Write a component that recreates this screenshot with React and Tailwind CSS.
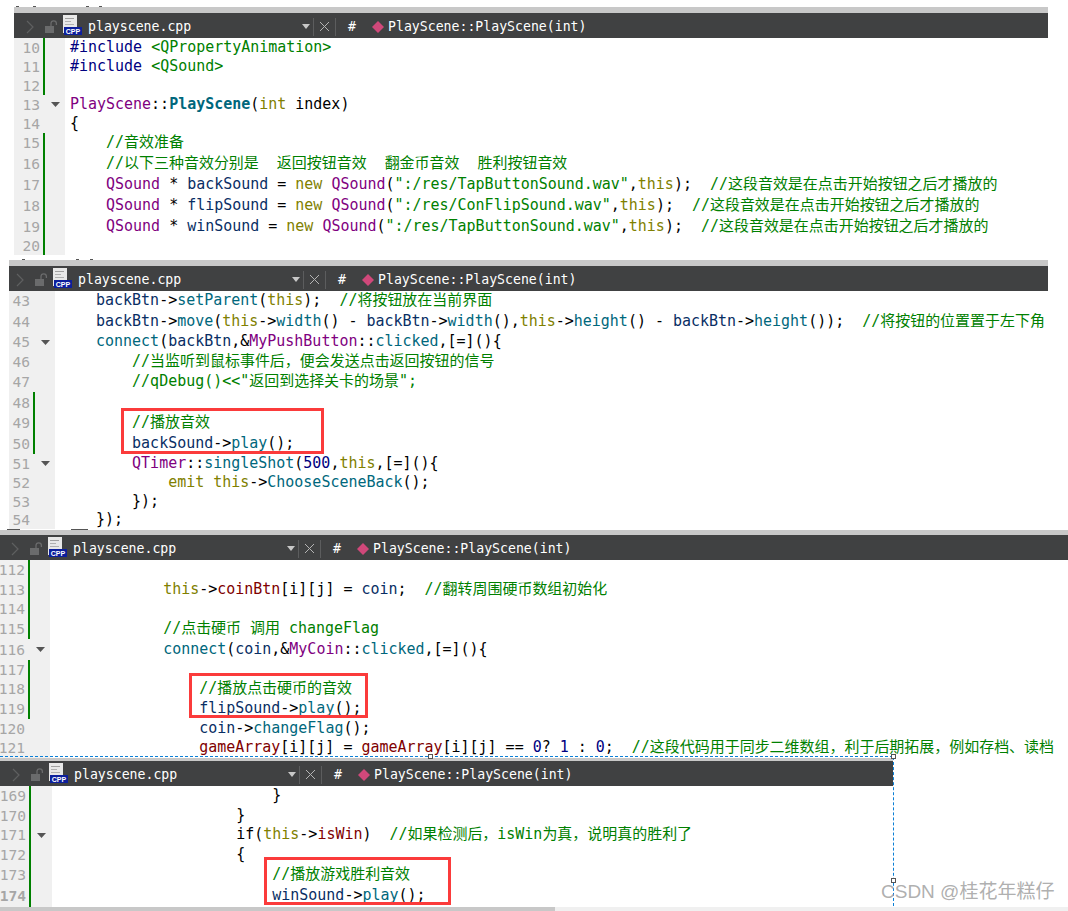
const COLORS = {
  p: 'text-[#000000]',
  n: 'text-[#000080]',
  g: 'text-[#008000]',
  m: 'text-[#800080]',
  f: 'text-[#00677c]',
  b: 'text-[#00677c] font-bold',
  k: 'text-[#808000]',
  v: 'text-[#092e64]',
  r: 'text-[#800000]',
};

const soundLine = (name, file, comment) => [
  ['p', '    '], ['m', 'QSound'], ['p', ' * '], ['v', name], ['p', ' = '], ['k', 'new'], ['p', ' '], ['m', 'QSound'], ['p', '('],
  ['g', `":/res/${file}"`], ['p', ','], ['k', 'this'], ['p', ');  '], ['g', comment],
];

const PLAY_COMMENT = '//这段音效是在点击开始按钮之后才播放的';

const PANELS = [
  {
    left: 'ml-[14px] w-[1034px]', pad: 'pl-[8px]', num: 'w-[26px]', rest: 'w-[20px]', code: 'pl-[5px]', top: 'mt-[6px]', band: 'h-[6px]',
    ticks: ['ml-[2px] w-[3px]', 'ml-[14px] w-[3px]', 'ml-[50px] w-[3px]', 'ml-[10px] w-[3px]'],
    rows: [
      { n: 10, h: 'h-[19px]', mark: true, t: [['n', '#include'], ['p', ' '], ['g', '<QPropertyAnimation>']] },
      { n: 11, h: 'h-[19px]', mark: true, t: [['n', '#include'], ['p', ' '], ['g', '<QSound>']] },
      { n: 12, h: 'h-[19px]', mark: true, t: [] },
      { n: 13, h: 'h-[19px]', fold: true, t: [['m', 'PlayScene'], ['p', '::'], ['b', 'PlayScene'], ['p', '('], ['k', 'int'], ['p', ' index)']] },
      { n: 14, h: 'h-[19px]', t: [['p', '{']] },
      { n: 15, h: 'h-[20px]', mark: true, t: [['g', '    //音效准备']] },
      { n: 16, h: 'h-[21px]', mark: true, t: [['g', '    //以下三种音效分别是  返回按钮音效  翻金币音效  胜利按钮音效']] },
      { n: 17, h: 'h-[21px]', mark: true, t: soundLine('backSound', 'TapButtonSound.wav', PLAY_COMMENT) },
      { n: 18, h: 'h-[21px]', mark: true, t: soundLine('flipSound', 'ConFlipSound.wav', PLAY_COMMENT) },
      { n: 19, h: 'h-[21px]', mark: true, t: soundLine('winSound', 'TapButtonSound.wav', PLAY_COMMENT) },
      { n: 20, h: 'h-[18px]', mark: true, t: [] },
    ],
  },
  {
    left: 'ml-[9px] w-[1039px]', pad: 'pl-[3px]', num: 'w-[21px]', rest: 'w-[20px]', code: 'pl-[5px]', top: 'mt-[4px]', band: 'h-[6px]',
    ticks: ['ml-[13px] w-[3px]', 'ml-[51px] w-[3px]', 'ml-[11px] w-[3px]'],
    rows: [
      { n: 43, h: 'h-[20px]', t: [['v', '    backBtn'], ['p', '->'], ['f', 'setParent'], ['p', '('], ['k', 'this'], ['p', ');  '], ['g', '//将按钮放在当前界面']] },
      { n: 44, h: 'h-[21px]', t: [['v', '    backBtn'], ['p', '->'], ['f', 'move'], ['p', '('], ['k', 'this'], ['p', '->'], ['f', 'width'], ['p', '() - '], ['v', 'backBtn'], ['p', '->'], ['f', 'width'], ['p', '(),'], ['k', 'this'], ['p', '->'], ['f', 'height'], ['p', '() - '], ['v', 'backBtn'], ['p', '->'], ['f', 'height'], ['p', '());  '], ['g', '//将按钮的位置置于左下角']] },
      { n: 45, h: 'h-[20px]', fold: true, t: [['f', '    connect'], ['p', '('], ['v', 'backBtn'], ['p', ',&'], ['m', 'MyPushButton'], ['p', '::'], ['f', 'clicked'], ['p', ',[=](){']] },
      { n: 46, h: 'h-[20px]', t: [['g', '        //当监听到鼠标事件后，便会发送点击返回按钮的信号']] },
      { n: 47, h: 'h-[20px]', t: [['g', '        //qDebug()<<"返回到选择关卡的场景";']] },
      { n: 48, h: 'h-[21px]', mark: true, t: [] },
      { n: 49, h: 'h-[20px]', mark: true, t: [['g', '        //播放音效']] },
      { n: 50, h: 'h-[21px]', mark: true, t: [['v', '        backSound'], ['p', '->'], ['f', 'play'], ['p', '();']] },
      { n: 51, h: 'h-[19px]', fold: true, t: [['m', '        QTimer'], ['p', '::'], ['f', 'singleShot'], ['p', '('], ['n', '500'], ['p', ','], ['k', 'this'], ['p', ',[=](){']] },
      { n: 52, h: 'h-[19px]', t: [['k', '            emit'], ['p', ' '], ['k', 'this'], ['p', '->'], ['f', 'ChooseSceneBack'], ['p', '();']] },
      { n: 53, h: 'h-[19px]', t: [['p', '        });']] },
      { n: 54, h: 'h-[18px]', t: [['p', '    });']] },
    ],
  },
  {
    left: 'w-[1068px]', pad: 'pl-[7px]', num: 'w-[25px]', rest: 'w-[20px]', code: 'pl-[5px]', top: 'mt-0', band: 'h-[5px]',
    ticks: ['ml-[7px] w-[13px]', 'ml-[51px] w-[17px]'],
    rows: [
      { n: 112, h: 'h-[20px]', mark: true, t: [] },
      { n: 113, h: 'h-[19px]', mark: true, t: [['k', '            this'], ['p', '->'], ['r', 'coinBtn'], ['p', '[i][j] = '], ['v', 'coin'], ['p', ';  '], ['g', '//翻转周围硬币数组初始化']] },
      { n: 114, h: 'h-[20px]', mark: true, t: [] },
      { n: 115, h: 'h-[20px]', mark: true, t: [['g', '            //点击硬币 调用 changeFlag']] },
      { n: 116, h: 'h-[21px]', fold: true, t: [['f', '            connect'], ['p', '('], ['v', 'coin'], ['p', ',&'], ['m', 'MyCoin'], ['p', '::'], ['f', 'clicked'], ['p', ',[=](){']] },
      { n: 117, h: 'h-[19px]', mark: true, t: [] },
      { n: 118, h: 'h-[19px]', mark: true, t: [['g', '                //播放点击硬币的音效']] },
      { n: 119, h: 'h-[21px]', mark: true, t: [['v', '                flipSound'], ['p', '->'], ['f', 'play'], ['p', '();']] },
      { n: 120, h: 'h-[19px]', t: [['v', '                coin'], ['p', '->'], ['f', 'changeFlag'], ['p', '();']] },
      { n: 121, h: 'h-[20px]', t: [['r', '                gameArray'], ['p', '[i][j] = '], ['r', 'gameArray'], ['p', '[i][j] == '], ['n', '0'], ['p', '? '], ['n', '1'], ['p', ' : '], ['n', '0'], ['p', ';  '], ['g', '//这段代码用于同步二维数组，利于后期拓展，例如存档、读档']] },
    ],
  },
  {
    left: 'w-[893px]', pad: 'pl-[8px]', num: 'w-[26px]', rest: 'w-[21px]', code: 'pl-[4px]', top: 'mt-0', band: 'h-[3px]',
    ticks: [],
    rows: [
      { n: 169, h: 'h-[20px]', mark: true, t: [['p', '                        }']] },
      { n: 170, h: 'h-[19px]', mark: true, t: [['p', '                    }']] },
      { n: 171, h: 'h-[20px]', mark: true, fold: true, t: [['p', '                    if('], ['k', 'this'], ['p', '->'], ['r', 'isWin'], ['p', ')  '], ['g', '//如果检测后，isWin为真，说明真的胜利了']] },
      { n: 172, h: 'h-[20px]', mark: true, t: [['p', '                    {']] },
      { n: 173, h: 'h-[20px]', mark: true, t: [['g', '                        //播放游戏胜利音效']] },
      { n: 174, h: 'h-[22px]', mark: true, bold: true, t: [['v', '                        winSound'], ['p', '->'], ['f', 'play'], ['p', '();']] },
    ],
  },
];

function FileIcon() {
  return (
    <svg width="19" height="20" viewBox="0 0 19 20" className="shrink-0">
      <rect x="0" y="0" width="14" height="18" fill="#e8e8e8" />
      <rect x="2" y="3" width="9" height="1" fill="#a0a0a0" />
      <rect x="2" y="6" width="6" height="1" fill="#b0b0b0" />
      <rect x="2" y="9" width="9" height="1" fill="#b0b0b0" />
      <rect x="1" y="12" width="18" height="8" fill="#0c1f9c" />
      <text x="10" y="19" textAnchor="middle" fontSize="7" fontWeight="700" fill="#ffffff" fontFamily="Liberation Sans, sans-serif">CPP</text>
    </svg>
  );
}

function EditorBar({ pad }) {
  return (
    <div className={`flex h-[25px] items-center gap-0 bg-[#404142] pt-[2px] font-['DejaVu_Sans_Mono',monospace] text-[13.2px] text-white ${pad}`}>
      <svg width="14" height="14" viewBox="0 0 14 14" className="ml-[1px] shrink-0 text-[#5f6061]">
        <path d="M4 1l6 6-6 6" fill="none" stroke="currentColor" strokeWidth="1.2" />
      </svg>
      <svg width="14" height="14" viewBox="0 0 14 14" className="ml-[8px] shrink-0">
        <rect x="0" y="6" width="9" height="7" fill="#6a6b6c" />
        <path d="M6 6V3.5a2.7 2.7 0 0 1 5.4 0V5" fill="none" stroke="#6a6b6c" strokeWidth="1.3" />
      </svg>
      <span className="ml-[4px] mb-[3px] shrink-0"><FileIcon /></span>
      <span className="ml-[6px] w-[214px] shrink-0 whitespace-pre">playscene.cpp</span>
      <svg width="8" height="5" viewBox="0 0 8 5" className="shrink-0">
        <path d="M0 0h8L4 5z" fill="#c8c8c8" />
      </svg>
      <span className="ml-[3px] h-[18px] w-px shrink-0 bg-[#5c5d5e]" />
      <svg width="11" height="11" viewBox="0 0 11 11" className="ml-[5px] shrink-0">
        <path d="M1 1l9 9M10 1l-9 9" stroke="#b4b4b4" strokeWidth="1" />
      </svg>
      <span className="ml-[5px] h-[18px] w-px shrink-0 bg-[#5c5d5e]" />
      <span className="ml-[12px] w-[22px] shrink-0">#</span>
      <svg width="12" height="12" viewBox="0 0 12 12" className="ml-[2px] shrink-0">
        <path d="M6 0l6 6-6 6-6-6z" fill="#d0487a" />
      </svg>
      <span className="ml-[4px] whitespace-pre">PlayScene::PlayScene(int)</span>
    </div>
  );
}

function CodeRow({ row, num, rest, code }) {
  return (
    <div className={`flex ${row.h}`}>
      <div className="flex shrink-0 bg-[#f0f0f0]">
        <span className={`flex items-center justify-end text-[14.6px] text-[#a6a6a6] ${num} ${row.bold ? 'font-bold text-[#6e6e6e]' : ''}`}>{row.n}</span>
        <span className="w-[3px]" />
        <span className={`w-[2px] ${row.mark ? 'bg-[#008000]' : ''}`} />
        <span className={`flex items-center pl-[6px] ${rest}`}>
          {row.fold && (
            <svg width="9" height="5" viewBox="0 0 9 5"><path d="M0 0h9L4.5 5z" fill="#555555" /></svg>
          )}
        </span>
      </div>
      <div className={`flex items-center whitespace-pre pb-[2px] ${code}`}>
        {row.t.map(([k, s], i) => (
          <span key={i} className={COLORS[k]}>{s}</span>
        ))}
      </div>
    </div>
  );
}

function Panel({ panel }) {
  return (
    <div className={`${panel.left} ${panel.top}`}>
      {/* leftovers of the text above the crop */}
      {panel.ticks.length > 0 && (
        <div className="flex h-px">
          {panel.ticks.map((tick) => (
            <span key={tick} className={`bg-[#555555] ${tick}`} />
          ))}
        </div>
      )}
      <div className={`bg-[#c8c8c8] ${panel.band}`} />
      <EditorBar pad={panel.pad} />
      <div className="font-['DejaVu_Sans_Mono','Noto_Sans_CJK_SC',monospace] text-[14.97px] leading-[20px] [&_span]:leading-[20px]">
        {panel.rows.map((row) => (
          <CodeRow key={row.n} row={row} num={panel.num} rest={panel.rest} code={panel.code} />
        ))}
      </div>
    </div>
  );
}

export default function App() {
  return (
    <div className="relative h-[911px] w-[1068px] overflow-hidden bg-white">
      {PANELS.map((panel) => (
        <Panel key={panel.rows[0].n} panel={panel} />
      ))}
      <div className="flex h-[5px] bg-[#f0f0f0]">
        <div className="w-[555px] bg-[#c8c8c8]" />
      </div>

      {/* red highlight boxes */}
      <div className="absolute left-[121px] top-[408px] h-[46px] w-[203px] border-[3px] border-[#fb3b3b]" />
      <div className="absolute left-[189px] top-[673px] h-[45px] w-[179px] border-[3px] border-[#fb3b3b]" />
      <div className="absolute left-[264px] top-[857px] h-[48px] w-[187px] border-[3px] border-[#fb3b3b]" />

      {/* selection outline of the pasted image */}
      <div className="absolute left-0 top-[756px] h-0 w-[893px] border-t border-dashed border-[#0a7fd6]" />
      <div className="absolute left-[893px] top-[757px] h-[149px] w-0 border-l border-dashed border-[#0a7fd6]" />
      <div className="absolute left-[428px] top-[754px] h-[5px] w-[5px] border border-[#555555] bg-white" />
      <div className="absolute left-[891px] top-[754px] h-[5px] w-[5px] border border-[#555555] bg-white" />
      <div className="absolute left-[891px] top-[878px] h-[5px] w-[5px] border border-[#555555] bg-white" />

      <div className="absolute left-[881px] top-[881px] font-['Liberation_Sans','Noto_Sans_CJK_SC',sans-serif] text-[19px] leading-[22px] text-[#9a9a9a]/80">
        CSDN @桂花年糕仔
      </div>
    </div>
  );
}
